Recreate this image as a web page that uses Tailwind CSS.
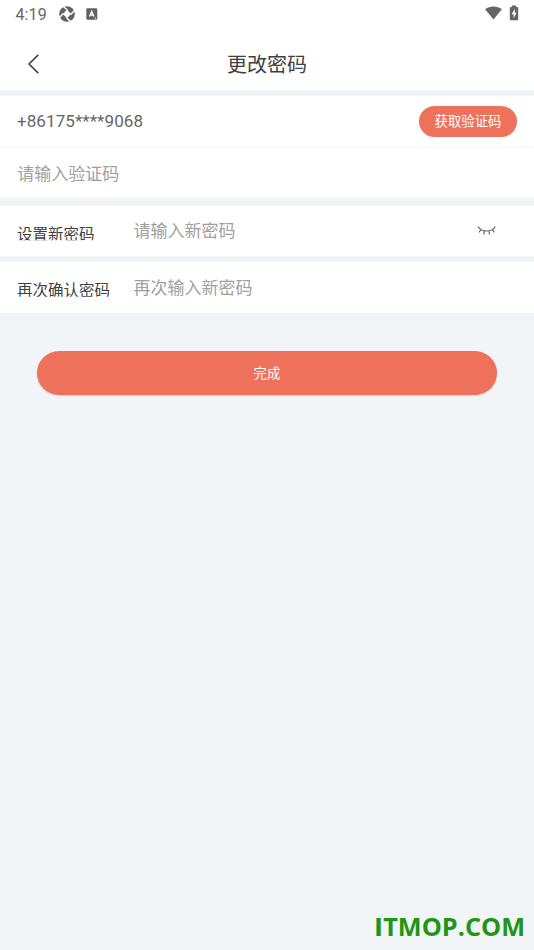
<!DOCTYPE html>
<html lang="zh-CN">
<head>
<meta charset="utf-8">
<meta name="viewport" content="width=device-width, initial-scale=1">
<title>更改密码</title>
<script src="https://cdn.jsdelivr.net/npm/@tailwindcss/browser@4"></script>
</head>
<body class="relative flex h-[950px] w-[534px] flex-col overflow-hidden bg-[#f1f5f7] font-[Roboto,'Noto_Sans_CJK_SC',sans-serif]">
  <div class="flex h-[28px] shrink-0 items-center bg-white pl-[15.500px] pr-[15px] text-[#666]">
    <span class="w-[43.500px] pt-px text-[16px] leading-none tracking-[0.1px]">4:19</span>
    <svg class="mb-px h-4 w-4" viewBox="0 0 16 16">
      <circle cx="8" cy="8" r="7.800" fill="#626262"/>
      <path d="M8 3.800 12.200 8 8 12.200 3.800 8Z" fill="#fff"/>
      <path d="M8.500 4.300 4.200.3M11.700 8.500 15.700 4.200M7.500 11.700l4.300 4M4.300 7.500.3 11.800" stroke="#fff" stroke-width="1.400"/>
    </svg>
    <svg class="ml-[11px] h-3 w-3" viewBox="0 0 12 12">
      <rect x=".3" y=".3" width="11" height="11.4" rx="1.2" fill="#626262"/>
      <path d="M3.500 8.600 5.700 3.500 7.900 8.600M4.400 7h2.600M8.800 10.200h1" fill="none" stroke="#fff" stroke-width="1.300"/>
    </svg>
    <svg class="mb-[2px] ml-auto h-[14px] w-[18px]" viewBox="0 0 18 14"><path d="M.1 3.200C4.800-.4 12.200-.4 16.900 3.200L8.500 13.600Z" fill="#666"/></svg>
    <svg class="mb-[2px] ml-[6px] h-4 w-[10px]" viewBox="0 0 10 16">
      <path d="M3 .5h4V2h1.200q1 0 1 1v11.300q0 1-1 1H1.800q-1 0-1-1V3q0-1 1-1H3Z" fill="#666"/>
      <path d="M5.800 3.800 2.600 9.200h2v4l3-5.500h-1.800Z" fill="#fff"/>
    </svg>
  </div>
  <header class="grid h-[62px] shrink-0 grid-cols-[67px_1fr_67px] items-center bg-white pb-[10px] text-[#404040]">
    <svg class="ml-[27px] mt-[20px] h-5 w-[13px]" viewBox="0 0 13 20" fill="none" stroke="#404040" stroke-width="1.5"><path d="M11.300.9 2 10l9.300 9.100"/></svg>
    <h1 class="mt-[22px] text-center text-[20px] leading-[30px]">更改密码</h1>
  </header>
  <main class="flex flex-col">
    <section class="mt-[6px] flex h-[50.500px] items-center justify-between bg-white px-[17px]">
      <span class="text-[17px] tracking-[0.080px] text-[#666]">+86175****9068</span>
      <button class="flex h-[31px] w-[98px] items-center justify-center rounded-full bg-[#ed715b] pt-[2px] text-[13.400px] text-white">获取验证码</button>
    </section>
    <section class="mt-[1.500px] flex h-[50px] items-center bg-white pl-[17.300px] pt-[3px] text-[17px] text-[#a0a0a0]">请输入验证码</section>
    <section class="mt-[7.500px] flex h-[50.500px] items-center bg-white pl-[17px] pr-[37px]">
      <label class="w-[116.500px] pt-[8px] text-[15.500px] leading-[20px] text-[#404040] [clip-path:inset(0_0_4.5px_0)]">设置新密码</label>
      <span class="pt-[2px] text-[17px] text-[#a0a0a0]">请输入新密码</span>
      <svg class="ml-auto h-[12px] w-[20px]" viewBox="0 0 20 12" fill="none" stroke="#666" stroke-width="1.200"><path d="M1 1.500Q3.500 6 9.700 6T18.300 1.500M4 4.500 2 7.300M7.300 5.800 6.800 9.500M12 5.800 12.500 9.500M15.300 4.500 17.300 7.300"/></svg>
    </section>
    <section class="mt-[6px] flex h-[50.500px] items-center bg-white pl-[17px]">
      <label class="w-[116.500px] pt-[8px] text-[15.500px] leading-[20px] text-[#404040] [clip-path:inset(0_0_4.5px_0)]">再次确认密码</label>
      <span class="pt-[2px] text-[17px] text-[#a0a0a0]">再次输入新密码</span>
    </section>
    <button class="mx-[37px] mt-[38.500px] flex h-[44px] items-center justify-center rounded-full bg-[#ed715b] pt-[2px] text-[13.400px] text-white shadow-[0_1px_2px_#0002]">完成</button>
  </main>
  <div class="absolute bottom-[5px] right-[9px] font-['Open_Sans',sans-serif] text-[25.300px] font-bold leading-[36px] text-[#229516]"><span class="mr-px font-[Inter,sans-serif] text-[24.800px] font-extrabold">I</span>TMOP.COM</div>
</body>
</html>
